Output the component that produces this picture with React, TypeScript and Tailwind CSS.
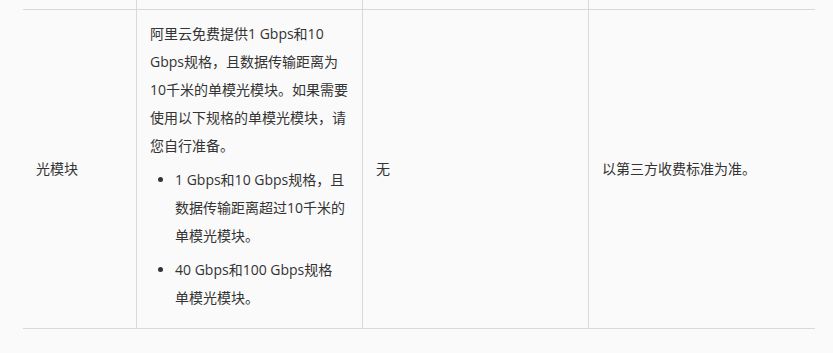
const font = {
  fontFamily: '"Open Sans", "Noto Sans CJK SC", sans-serif',
};

const Cell = ({ children, className = '' }: { children?: React.ReactNode; className?: string }) => (
  <div className={`px-[13px] text-[14px] leading-[28px] text-[#333] ${className}`}>{children}</div>
);

export default function App() {
  return (
    <div className="min-h-[353px] w-[833px] bg-[#fafafa] pl-[23px]" style={font}>
      {/* tail of the previous row */}
      <div className="grid h-[9px] w-[792px] grid-cols-[113px_226px_226px_227px]">
        <div />
        <div className="border-l border-[#d9d9d9]" />
        <div className="border-l border-[#d9d9d9]" />
        <div className="border-l border-[#d9d9d9]" />
      </div>
      <div className="grid w-[792px] grid-cols-[113px_226px_226px_227px] border-y border-[#d9d9d9]">
        <Cell className="flex items-center">光模块</Cell>
        <Cell className="border-l border-[#d9d9d9] pt-[10px] pb-[10px]">
          <p>
            阿里云免费提供1 Gbps和10 Gbps规格，且数据传输距离为10千米的单模光模块。如果需要使用以下规格的单模光模块，请您自行准备。
          </p>
          <ul className="list-disc pl-[25px] pr-[3px]">
            <li className="mt-[6px]">1 Gbps和10 Gbps规格，且数据传输距离超过10千米的单模光模块。</li>
            <li className="mt-[6px] mb-[6px]">40 Gbps和100 Gbps规格单模光模块。</li>
          </ul>
        </Cell>
        <Cell className="flex items-center border-l border-[#d9d9d9]">无</Cell>
        <Cell className="flex items-center border-l border-[#d9d9d9]">以第三方收费标准为准。</Cell>
      </div>
    </div>
  );
}
